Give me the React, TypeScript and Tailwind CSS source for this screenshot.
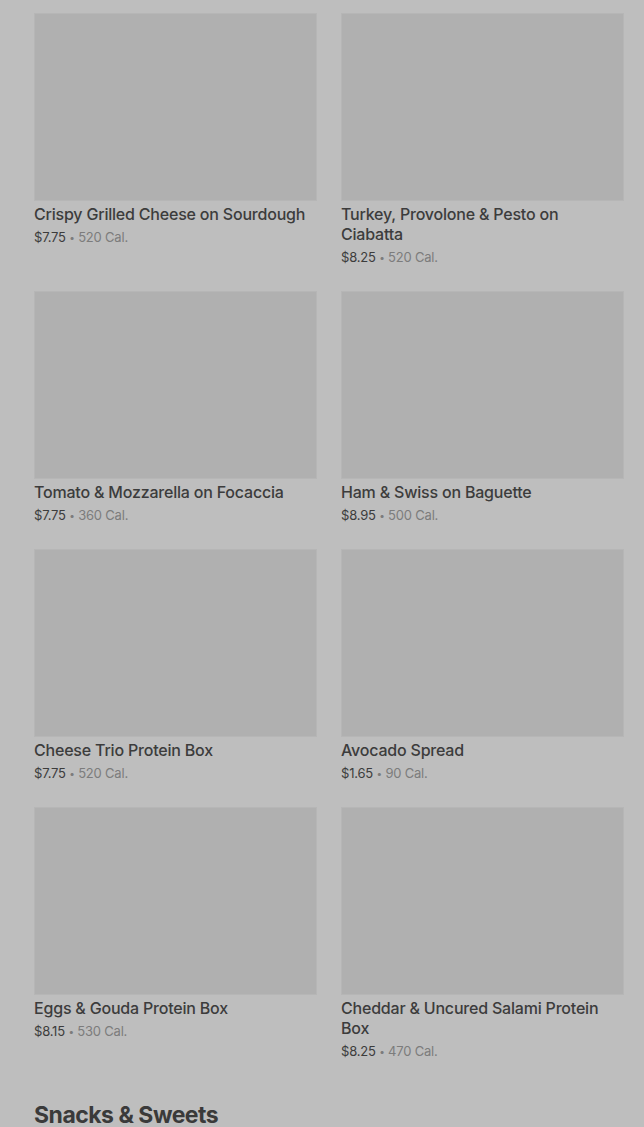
import React from 'react';

type Item = { name: string; price: string; cal: string };

const items: Item[] = [
  { name: 'Crispy Grilled Cheese on Sourdough', price: '$7.75', cal: '520 Cal.' },
  { name: 'Turkey, Provolone & Pesto on Ciabatta', price: '$8.25', cal: '520 Cal.' },
  { name: 'Tomato & Mozzarella on Focaccia', price: '$7.75', cal: '360 Cal.' },
  { name: 'Ham & Swiss on Baguette', price: '$8.95', cal: '500 Cal.' },
  { name: 'Cheese Trio Protein Box', price: '$7.75', cal: '520 Cal.' },
  { name: 'Avocado Spread', price: '$1.65', cal: '90 Cal.' },
  { name: 'Eggs & Gouda Protein Box', price: '$8.15', cal: '530 Cal.' },
  { name: 'Cheddar & Uncured Salami Protein Box', price: '$8.25', cal: '470 Cal.' },
];

const MenuCard: React.FC<{ item: Item }> = ({ item }) => (
  <div className="flex flex-col">
    <div className="h-[188px] w-full bg-[#b0b0b0] border border-[#b6b6b6]" />
    <div className="mt-[3px] text-[16px] leading-[20px] font-medium tracking-[-0.2px] text-[#3c3c3c]">
      {item.name}
    </div>
    <div className="mt-[3px] h-[20px] text-[13px] leading-[20px] tracking-[-0.2px] text-[#3c3c3c]">
      {item.price}
      <span className="text-[#7c7c7c]">
        {' '}
        <span className="inline-block align-[1px] text-[10px] leading-none">•</span> {item.cal}
      </span>
    </div>
  </div>
);

const App: React.FC = () => {
  return (
    <div
      className="h-[1127px] overflow-hidden bg-[#bebebe] pt-[13px] pl-[34px] pr-[20px]"
      style={{ fontFamily: 'Inter, "Liberation Sans", sans-serif' }}
    >
      <div className="grid grid-cols-2 gap-x-[24px] gap-y-[24px]">
        {items.map((item) => (
          <MenuCard key={item.name} item={item} />
        ))}
      </div>
      <h2 className="mt-[38px] text-[23px] leading-[32px] font-bold tracking-[-0.5px] text-[#3a3a3a]">
        Snacks &amp; Sweets
      </h2>
    </div>
  );
};

export default App;
